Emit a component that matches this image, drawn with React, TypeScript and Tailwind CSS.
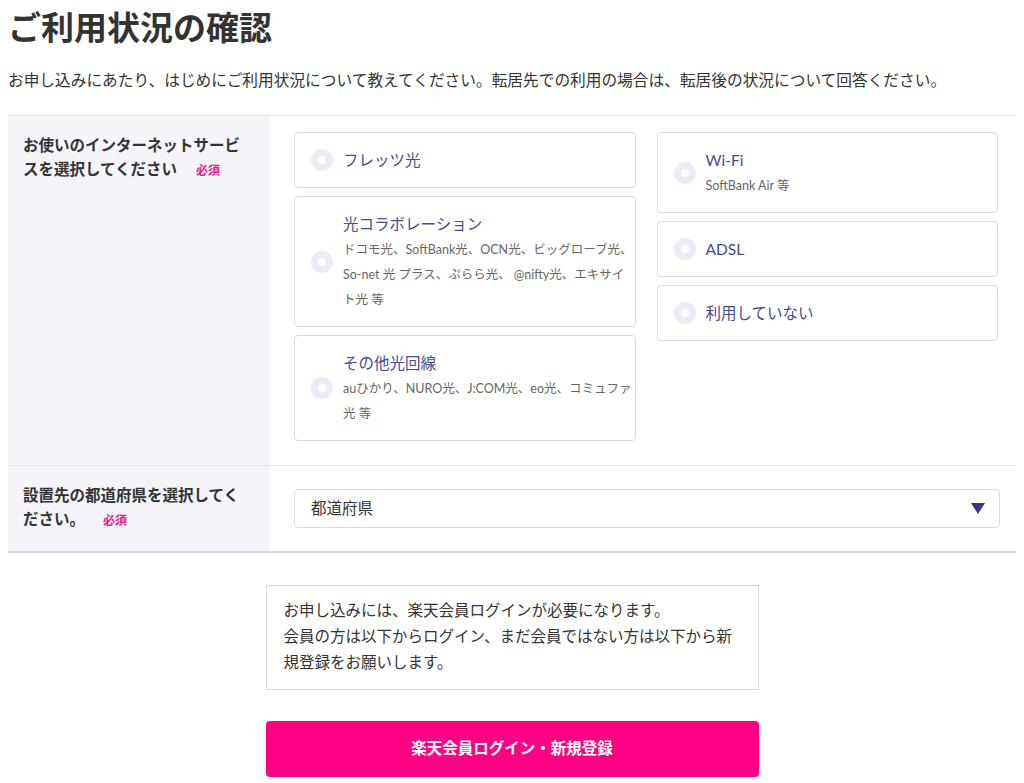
import React from "react";

type Option = {
  title: string;
  desc?: string[];
};

const leftOptions: Option[] = [
  { title: "フレッツ光" },
  {
    title: "光コラボレーション",
    desc: [
      "ドコモ光、SoftBank光、OCN光、ビッグローブ光、",
      "So-net 光 プラス、ぷらら光、 @nifty光、エキサイ",
      "ト光 等",
    ],
  },
  {
    title: "その他光回線",
    desc: ["auひかり、NURO光、J:COM光、eo光、コミュファ", "光 等"],
  },
];

const rightOptions: Option[] = [
  { title: "Wi-Fi", desc: ["SoftBank Air 等"] },
  { title: "ADSL" },
  { title: "利用していない" },
];

function Radio() {
  return (
    <span className="flex h-[22px] w-[22px] shrink-0 items-center justify-center rounded-full bg-[#ececf8]">
      <span className="h-[8px] w-[8px] rounded-full bg-white" />
    </span>
  );
}

function OptionCard({ option }: { option: Option }) {
  return (
    <label className="flex cursor-pointer items-center rounded-[4px] border border-[#dcdcdc] bg-white py-[14px] pl-[16px] pr-[10px]">
      <Radio />
      <div className="ml-[10px] min-w-0">
        <div className="text-[15.5px] leading-[26px] text-[#4a4a8e]">{option.title}</div>
        {option.desc && (
          <div className="whitespace-nowrap text-[12.5px] leading-[25px] text-[#666]">
            {option.desc.map((line, i) => (
              <div key={i}>{line}</div>
            ))}
          </div>
        )}
      </div>
    </label>
  );
}

function Required({ className = "" }: { className?: string }) {
  return <span className={`text-[12px] font-bold text-[#e8188a] ${className}`}>必須</span>;
}

export default function App() {
  return (
    <div
      className="min-h-screen bg-white px-2 text-[#333]"
      style={{ fontFamily: 'Lato, "Noto Sans CJK JP", sans-serif' }}
    >
      {/* Heading */}
      <h1 className="text-[33px] font-bold leading-[54px] text-[#333]">ご利用状況の確認</h1>
      <p className="mt-[14px] whitespace-nowrap text-[15.7px] leading-[24px]">
        お申し込みにあたり、はじめにご利用状況について教えてください。転居先での利用の場合は、転居後の状況について回答ください。
      </p>

      {/* Form */}
      <div className="mt-[23px] border-t border-[#e4e4ea] border-b-2 border-b-[#dadae6]">
        {/* Internet service */}
        <div className="grid grid-cols-[262px_1fr] border-b border-[#e4e4ea]">
          <div className="bg-[#f4f4f9] px-[15px] pt-[17px]">
            <p className="whitespace-nowrap text-[15.5px] font-bold leading-[24px]">
              お使いのインターネットサービ
              <br />
              スを選択してください
              <Required className="ml-[19px]" />
            </p>
          </div>
          <div className="flex gap-[21px] pb-[24px] pl-[24px] pr-[18px] pt-[16px]">
            <div className="flex min-w-0 flex-1 basis-0 flex-col gap-2">
              {leftOptions.map((o) => (
                <OptionCard key={o.title} option={o} />
              ))}
            </div>
            <div className="flex min-w-0 flex-1 basis-0 flex-col gap-2">
              {rightOptions.map((o) => (
                <OptionCard key={o.title} option={o} />
              ))}
            </div>
          </div>
        </div>

        {/* Prefecture */}
        <div className="grid grid-cols-[262px_1fr]">
          <div className="bg-[#f4f4f9] px-[15px] pt-[17px]">
            <p className="whitespace-nowrap text-[15.5px] font-bold leading-[24px]">
              設置先の都道府県を選択してく
              <br />
              ださい。
              <Required className="ml-[18px]" />
            </p>
          </div>
          <div className="py-[23px] pl-[24px] pr-[16px]">
            <div className="flex h-[39px] items-center justify-between rounded-[4px] border border-[#dcdcdc] bg-white pl-[16px] pr-[14px]">
              <span className="text-[15.5px]">都道府県</span>
              <svg width="14" height="11" viewBox="0 0 14 11">
                <path d="M0 0 H14 L7 11 Z" fill="#35358f" />
              </svg>
            </div>
          </div>
        </div>
      </div>

      {/* Login notice */}
      <div className="mx-auto mt-[32px] w-[493px]">
        <div className="border border-[#d8d8d8] pb-[14px] pl-[17px] pr-[12px] pt-[11px]">
          <p className="whitespace-nowrap text-[15.5px] leading-[26px]">
            お申し込みには、楽天会員ログインが必要になります。
            <br />
            会員の方は以下からログイン、まだ会員ではない方は以下から新
            <br />
            規登録をお願いします。
          </p>
        </div>
        <button className="mt-[31px] flex h-[56px] w-full items-center justify-center rounded-[4px] bg-[#ff0084] text-[15.5px] font-bold text-white">
          楽天会員ログイン・新規登録
        </button>
      </div>
    </div>
  );
}
